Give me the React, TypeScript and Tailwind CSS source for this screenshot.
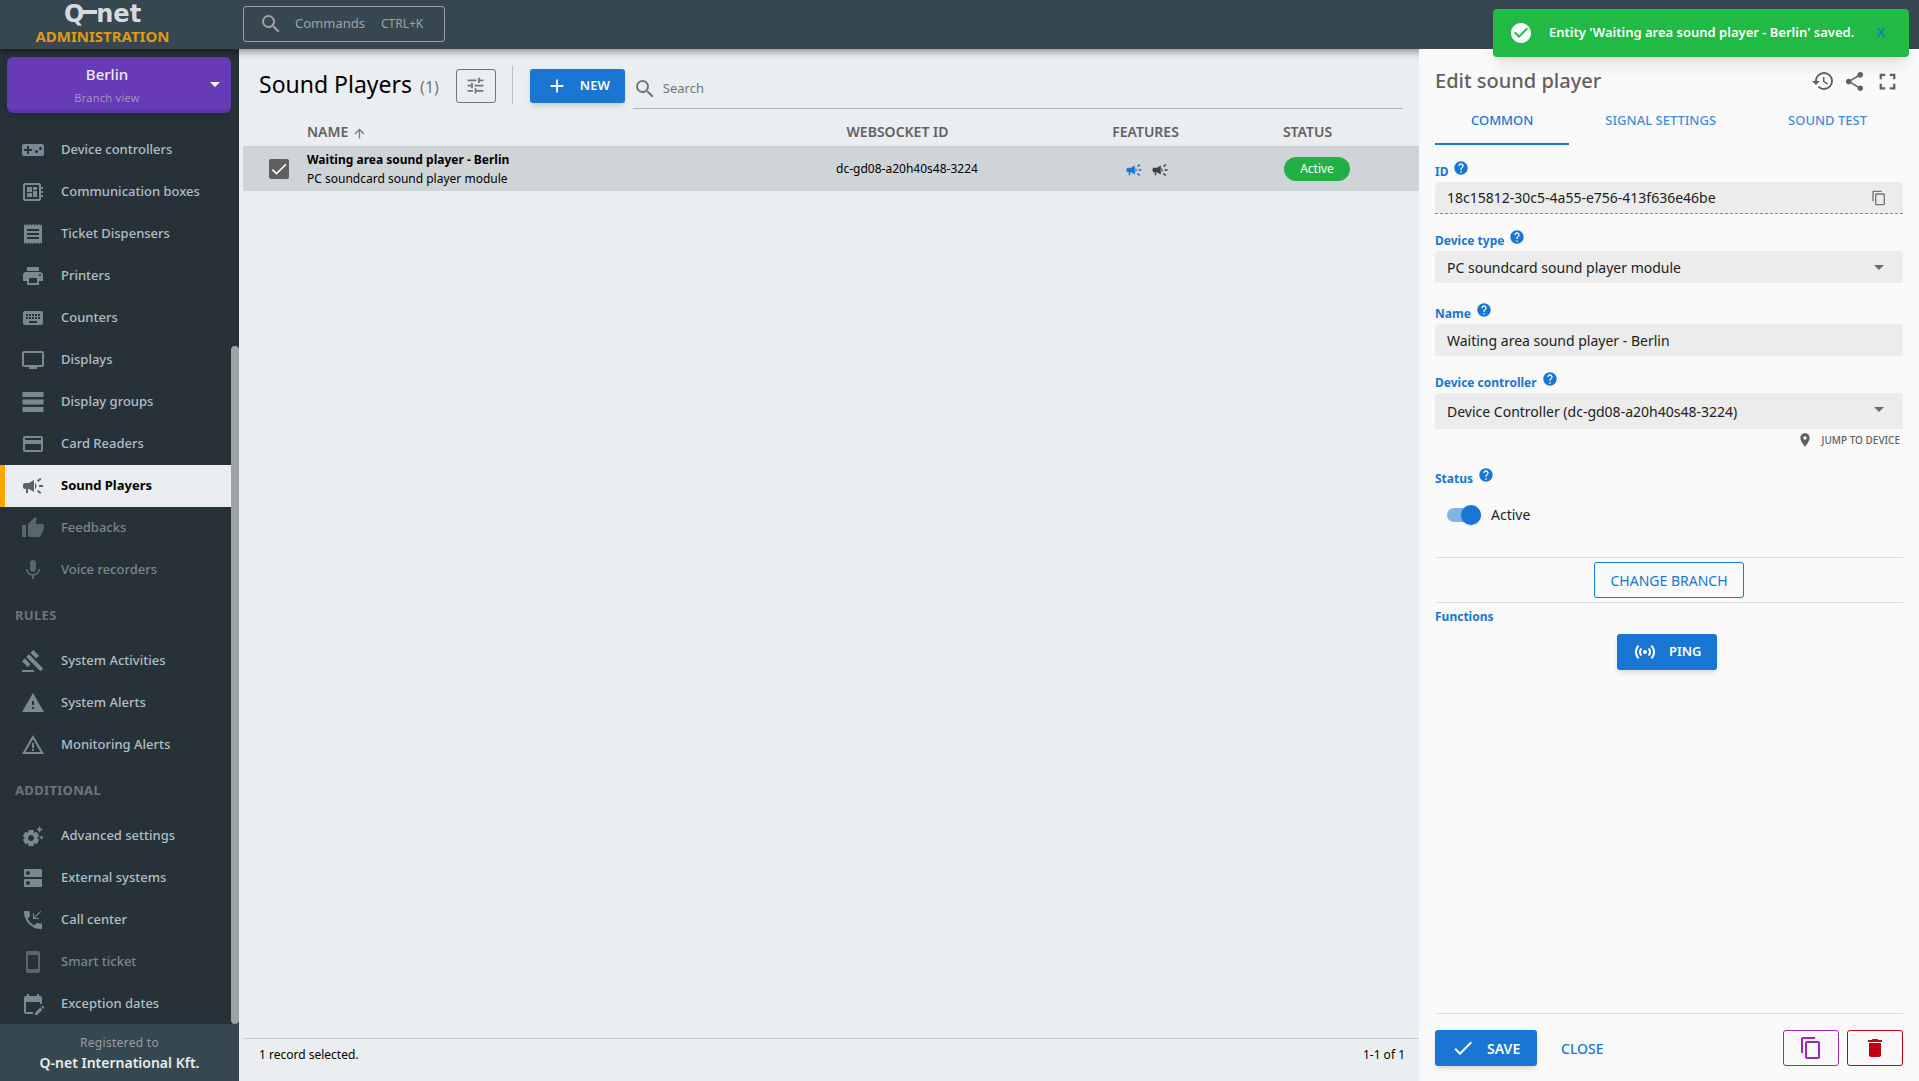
import { useState } from 'react';
import type { ReactNode } from 'react';
import type { IconType } from 'react-icons';
import {
  MdAdd, MdArrowDropDown, MdArrowUpward, MdCampaign, MdCheck, MdCheckCircle, MdContentCopy,
  MdDelete, MdDeveloperBoard, MdDns, MdEditCalendar, MdFullscreen, MdGavel, MdHelp, MdHistory,
  MdKeyboard, MdMic, MdPayment, MdPhoneCallback, MdPlace, MdPrint, MdReceipt, MdSearch, MdSensors,
  MdSettingsSuggest, MdShare, MdStayCurrentPortrait, MdThumbUp, MdTune, MdTv, MdVideogameAsset,
  MdWarning, MdWarningAmber,
} from 'react-icons/md';
import clsx from 'clsx';

type NavItem = {
  label: string;
  icon: IconType | typeof BarsIcon;
  active?: boolean;
  disabled?: boolean;
};

// Three stacked bars for the display groups entry
function BarsIcon({ size = 24, className }: { size?: number; className?: string }) {
  return (
    <svg width={size} height={size} viewBox="0 0 24 24" fill="currentColor" className={className}>
      <path d="M1.5 2h21v5h-21zM1.5 9.5h21v5h-21zM1.5 17h21v5h-21z" />
    </svg>
  );
}

const devices: NavItem[] = [
  { label: 'Device controllers', icon: MdVideogameAsset },
  { label: 'Communication boxes', icon: MdDeveloperBoard },
  { label: 'Ticket Dispensers', icon: MdReceipt },
  { label: 'Printers', icon: MdPrint },
  { label: 'Counters', icon: MdKeyboard },
  { label: 'Displays', icon: MdTv },
  { label: 'Display groups', icon: BarsIcon },
  { label: 'Card Readers', icon: MdPayment },
  { label: 'Sound Players', icon: MdCampaign, active: true },
  { label: 'Feedbacks', icon: MdThumbUp, disabled: true },
  { label: 'Voice recorders', icon: MdMic, disabled: true },
];

const rules: NavItem[] = [
  { label: 'System Activities', icon: MdGavel },
  { label: 'System Alerts', icon: MdWarning },
  { label: 'Monitoring Alerts', icon: MdWarningAmber },
];

const additional: NavItem[] = [
  { label: 'Advanced settings', icon: MdSettingsSuggest },
  { label: 'External systems', icon: MdDns },
  { label: 'Call center', icon: MdPhoneCallback },
  { label: 'Smart ticket', icon: MdStayCurrentPortrait, disabled: true },
  { label: 'Exception dates', icon: MdEditCalendar },
];

function NavList({ title, items }: { title?: string; items: NavItem[] }) {
  return (
    <div>
      {title && (
        <h2 className="flex h-[49px] items-center pl-[15px] text-[13px] font-bold tracking-wide text-[#6f747b]">
          {title}
        </h2>
      )}
      {items.map(({ label, icon: Icon, active, disabled }) => (
        <a
          key={label}
          href="#"
          className={clsx(
            'flex h-[42px] items-center border-l-[5px] pl-4 text-[13px]',
            active ? 'border-[#ffa500] bg-[#ebeef1] font-bold text-black' : 'border-transparent font-medium text-[#b0bec5]',
            disabled && 'opacity-60'
          )}
        >
          <span className="w-10">
            <Icon size={24} className={active ? 'text-[#616161]' : 'text-[#7b8a92]'} />
          </span>
          {label}
        </a>
      ))}
    </div>
  );
}

function Sidebar() {
  return (
    <aside className="flex w-[239px] shrink-0 flex-col bg-[#263238]">
      <div className="flex min-h-0 flex-1">
        <div className="min-w-0 flex-1 overflow-hidden">
          <div className="pt-2 pb-4 pl-[7px]">
            <button className="flex h-14 w-full items-center rounded-md border-b-[3px] border-[#5c34a4] bg-[#673ab7] pr-1 shadow-md">
              <span className="flex flex-1 flex-col items-center pt-[5px] pl-1">
                <span className="text-[15px] leading-5 font-medium text-white/90">Berlin</span>
                <span className="pt-1 text-[11px] leading-5 tracking-wide text-[#a393bd]">Branch view</span>
              </span>
              <MdArrowDropDown size={24} className="text-white" />
            </button>
          </div>
          <nav>
            <NavList items={devices} />
            <NavList title="RULES" items={rules} />
            <NavList title="ADDITIONAL" items={additional} />
          </nav>
        </div>
        {/* Scroll track */}
        <div className="flex w-2 shrink-0 flex-col justify-end">
          <div className="h-[69.5%] rounded-full bg-[#9ea3a7]" />
        </div>
      </div>
      <footer className="flex h-[57px] shrink-0 flex-col items-center justify-center bg-[#37474f]">
        <span className="text-[12px] leading-5 tracking-wide text-[#979da1]">Registered to</span>
        <span className="text-[14px] leading-5 font-semibold text-white/90">Q-net International Kft.</span>
      </footer>
    </aside>
  );
}

function TopBar() {
  return (
    <header className="z-10 flex h-[49px] shrink-0 items-start bg-[#37474f] shadow-[0_2px_8px_rgba(0,0,0,0.45)]">
      <div className="flex w-[243px] shrink-0 flex-col items-center pr-[38px]">
        <div className="flex font-['DejaVu_Sans'] text-[24px] leading-7 font-bold text-[#d7dadc]">
          <span>Q</span>
          <svg width="14" height="28" viewBox="0 0 14 28" className="-mx-px">
            <path d="M0 10h14v4H0z" fill="currentColor" />
          </svg>
          <span>net</span>
        </div>
        <span className="text-[15px] leading-4 font-bold text-[#dc9a16]">ADMINISTRATION</span>
      </div>
      <button className="mt-[6px] flex h-9 w-[202px] items-center rounded-[3px] border border-[#9b9fa1] pl-[15px] text-[#9fa3a5]">
        <MdSearch size={24} />
        <span className="pl-3 text-[13px]">Commands</span>
        <span className="pl-4 text-[12px]">CTRL+K</span>
      </button>
    </header>
  );
}

function HeadCell({ label, sorted, left }: { label: string; sorted?: boolean; left?: boolean }) {
  return (
    <th className="p-0 text-[14px] font-semibold text-[#616161]">
      <span className={clsx('flex items-center gap-1', !left && 'justify-center')}>
        {label}
        <MdArrowUpward size={15} className={sorted ? 'mt-1 text-[#757575]' : 'invisible'} />
      </span>
    </th>
  );
}

function PlayerList() {
  const [selected, setSelected] = useState(true);

  return (
    <main className="flex min-w-0 flex-1 flex-col bg-[#ebeef1] pl-1">
      <div className="flex h-[68px] items-center pt-1 pr-4 pl-4">
        <h1 className="pb-[2px] text-[23px] text-black">Sound Players</h1>
        <span className="pt-1 pl-2 text-[16px] text-[#757575]">(1)</span>
        <button aria-label="Filter" className="mt-px ml-[17px] flex h-[34px] w-10 items-center justify-center rounded-[3px] border border-[#757575] text-[#757575]">
          <MdTune size={21} />
        </button>
        <div className="ml-4 h-[38px] w-px bg-[#bcc0c3]" />
        <button className="mt-px ml-[17px] flex h-[34px] w-[95px] items-center rounded-[3px] bg-[#1976d2] pl-4 text-[13px] font-semibold text-white shadow-md">
          <MdAdd size={22} />
          <span className="pl-3">NEW</span>
        </button>
        <label className="mt-1 ml-2 flex h-11 flex-1 items-center border-b border-[#b0b4b7] pt-1 text-[#757575]">
          <MdSearch size={24} className="shrink-0" />
          <input type="text" aria-label="Search" placeholder="Search" className="w-full bg-transparent pl-[6px] text-[13px] outline-none placeholder:text-[#757575]" />
        </label>
      </div>

      <table className="w-full table-fixed text-[13px]">
        <colgroup>
          <col className="w-16" />
          <col />
          <col className="w-94" />
          <col className="w-30" />
          <col className="w-51" />
        </colgroup>
        <thead>
          <tr className="h-[29px]">
            <th />
            <HeadCell label="NAME" sorted left />
            <HeadCell label="WEBSOCKET ID" />
            <HeadCell label="FEATURES" />
            <HeadCell label="STATUS" />
          </tr>
        </thead>
        <tbody>
          <tr className="h-[45px] border-t border-[#c8cdd0] bg-[#cfd4d7] text-black">
            <td className="p-0 pl-[26px]">
              <label className={clsx('flex size-5 items-center justify-center rounded-[2px] border-2 border-[#5f5f5f] text-white', selected && 'bg-[#5f5f5f]')}>
                <input
                  type="checkbox"
                  aria-label="Select Waiting area sound player - Berlin"
                  checked={selected}
                  onChange={() => setSelected(!selected)}
                  className="sr-only"
                />
                {selected && <MdCheck size={20} className="shrink-0" />}
              </label>
            </td>
            <td className="p-0 text-[12px] leading-[19px]">
              <div className="font-bold">Waiting area sound player - Berlin</div>
              <div>PC soundcard sound player module</div>
            </td>
            <td className="p-0 text-center text-[12px]">dc-gd08-a20h40s48-3224</td>
            <td className="p-0">
              <div className="flex justify-center gap-2 pt-[2px] pr-4">
                <MdCampaign size={18} className="text-[#1976d2]" />
                <MdCampaign size={18} className="text-[#424242]" />
              </div>
            </td>
            <td className="p-0 text-center">
              <span className="inline-flex h-6 w-[66px] items-center justify-center rounded-full bg-[#21b045] text-[12px] text-white">
                Active
              </span>
            </td>
          </tr>
        </tbody>
      </table>

      <footer className="mt-auto flex h-[43px] justify-between border-t border-[#c9cdd0] px-4 pt-2 pr-[14px] text-[12px] leading-4 text-black">
        <span>1 record selected.</span>
        <span>1-1 of 1</span>
      </footer>
    </main>
  );
}

function FieldLabel({ id, children }: { id: string; children: ReactNode }) {
  return (
    <div className="flex h-[23px] items-start gap-[5px] pt-px">
      <label htmlFor={id} className="pt-1 text-[12px] leading-4 font-bold text-[#1976d2]">
        {children}
      </label>
      <MdHelp size={16} className="text-[#1976d2]" />
    </div>
  );
}

const fieldClass = 'w-full appearance-none rounded-t-[4px] bg-[#ececec] pr-10 pl-3 text-[14px] text-[#212121] outline-none';

function SelectField({ id, value, tall }: { id: string; value: string; tall?: boolean }) {
  return (
    <div className="relative">
      <select id={id} className={clsx(fieldClass, tall ? 'h-9' : 'h-8')}>
        <option>{value}</option>
      </select>
      <MdArrowDropDown size={24} className="pointer-events-none absolute top-1 right-3 text-[#6b6b6b]" />
    </div>
  );
}

const tabs = ['COMMON', 'SIGNAL SETTINGS', 'SOUND TEST'];

function EditPanel() {
  const [tab, setTab] = useState(tabs[0]);
  const [active, setActive] = useState(true);

  return (
    <section className="flex w-[500px] shrink-0 flex-col bg-[#fafafa] px-4">
      <div className="flex items-center pt-[18px] text-[#616161]">
        <h2 className="flex-1 text-[20px] leading-7 font-medium">Edit sound player</h2>
        <div className="flex items-center gap-2 pr-[2px]">
          <button aria-label="History"><MdHistory size={24} /></button>
          <button aria-label="Share"><MdShare size={23} /></button>
          <button aria-label="Fullscreen"><MdFullscreen size={27} /></button>
        </div>
      </div>

      <div role="tablist" className="flex h-[50px]">
        {tabs.map((name) => (
          <button
            key={name}
            role="tab"
            aria-selected={tab === name}
            onClick={() => setTab(name)}
            className={clsx(
              'flex-auto border-b-2 pt-1 text-[13px] font-medium text-[#1976d2]',
              tab === name ? 'border-[#1976d2]' : 'border-transparent text-[#1976d2]/85'
            )}
          >
            {name}
          </button>
        ))}
      </div>

      <div className="pt-[14px]">
        <FieldLabel id="entity-id">ID</FieldLabel>
        <div className="relative">
          <input id="entity-id" readOnly value="18c15812-30c5-4a55-e756-413f636e46be" className={clsx(fieldClass, 'h-8 border-b border-dashed border-[#8a8a8a]')} />
          <button aria-label="Copy ID" className="absolute top-2 right-4 text-[#757575]">
            <MdContentCopy size={16} />
          </button>
        </div>
      </div>
      <div className="pt-[14px]">
        <FieldLabel id="device-type">Device type</FieldLabel>
        <SelectField id="device-type" value="PC soundcard sound player module" />
      </div>
      <div className="pt-[18px]">
        <FieldLabel id="name">Name</FieldLabel>
        <input id="name" defaultValue="Waiting area sound player - Berlin" className={clsx(fieldClass, 'h-8')} />
      </div>
      <div className="pt-[14px]">
        <FieldLabel id="controller">Device controller</FieldLabel>
        <SelectField id="controller" value="Device Controller (dc-gd08-a20h40s48-3224)" tall />
      </div>
      <a href="#" className="mt-[3px] flex items-center gap-2 self-end pr-[3px] text-[10px] leading-4 font-medium text-[#616161]">
        <MdPlace size={16} />
        JUMP TO DEVICE
      </a>

      <div className="pt-[18px]">
        <FieldLabel id="status">Status</FieldLabel>
        <label className="mt-4 ml-3 flex w-fit items-center gap-[10px] text-[14px] leading-5 text-[#212121]">
          <input id="status" type="checkbox" checked={active} onChange={() => setActive(!active)} className="sr-only" />
          <span className={clsx('flex h-[14px] w-[34px] items-center rounded-full', active ? 'justify-end bg-[#82b3e5]' : 'bg-[#bdbdbd]')}>
            <span className={clsx('size-5 shrink-0 rounded-full shadow', active ? 'bg-[#1976d2]' : 'bg-white')} />
          </span>
          Active
        </label>
      </div>

      <div className="mt-8 flex justify-center border-y border-[#dcdcdc] py-1">
        <button className="h-9 w-[150px] rounded-[3px] border border-[#1976d2] text-[14px] text-[#1976d2]">
          CHANGE BRANCH
        </button>
      </div>
      <h3 className="pt-[6px] text-[12px] leading-4 font-bold text-[#1976d2]">Functions</h3>
      <button className="mt-[9px] mr-1 flex h-9 w-[100px] items-center gap-3 self-center rounded-[3px] bg-[#1976d2] pl-4 text-[13px] font-semibold text-white shadow-md">
        <MdSensors size={24} />
        PING
      </button>

      <footer className="mt-auto flex items-center gap-2 border-t border-[#dcdcdc] pt-4 pb-[15px]">
        <button className="flex h-9 w-[102px] items-center gap-3 rounded-[3px] bg-[#1976d2] pl-4 text-[14px] font-semibold text-white shadow-md">
          <MdCheck size={24} />
          SAVE
        </button>
        <button className="h-9 px-4 text-[14px] font-medium text-[#1976d2]">CLOSE</button>
        <button aria-label="Duplicate" className="ml-auto flex h-9 w-14 items-center justify-center rounded-[3px] border border-[#9c27b0] text-[#9c27b0]">
          <MdContentCopy size={24} />
        </button>
        <button aria-label="Delete" className="flex h-9 w-14 items-center justify-center rounded-[3px] border border-[#c10015] text-[#c10015]">
          <MdDelete size={24} />
        </button>
      </footer>
    </section>
  );
}

export default function App() {
  const [toastOpen, setToastOpen] = useState(true);

  return (
    <div className="flex h-screen flex-col overflow-hidden font-['Noto_Sans',sans-serif]">
      <TopBar />
      <div className="flex min-h-0 flex-1">
        <Sidebar />
        <PlayerList />
        <div className="z-20 flex">
          <EditPanel />
        </div>
      </div>

      {toastOpen && (
        <div role="status" className="absolute top-[9px] right-[10px] z-30 flex h-12 w-[416px] items-center rounded-[4px] bg-[#21ba45] px-4 text-white shadow-lg">
          <MdCheckCircle size={24} className="shrink-0" />
          <span className="flex-1 pl-4 text-[13px] font-semibold whitespace-nowrap">
            Entity 'Waiting area sound player - Berlin' saved.
          </span>
          <button onClick={() => setToastOpen(false)} className="px-2 text-[13px] font-semibold text-[#1976d2]">X</button>
        </div>
      )}
    </div>
  );
}
